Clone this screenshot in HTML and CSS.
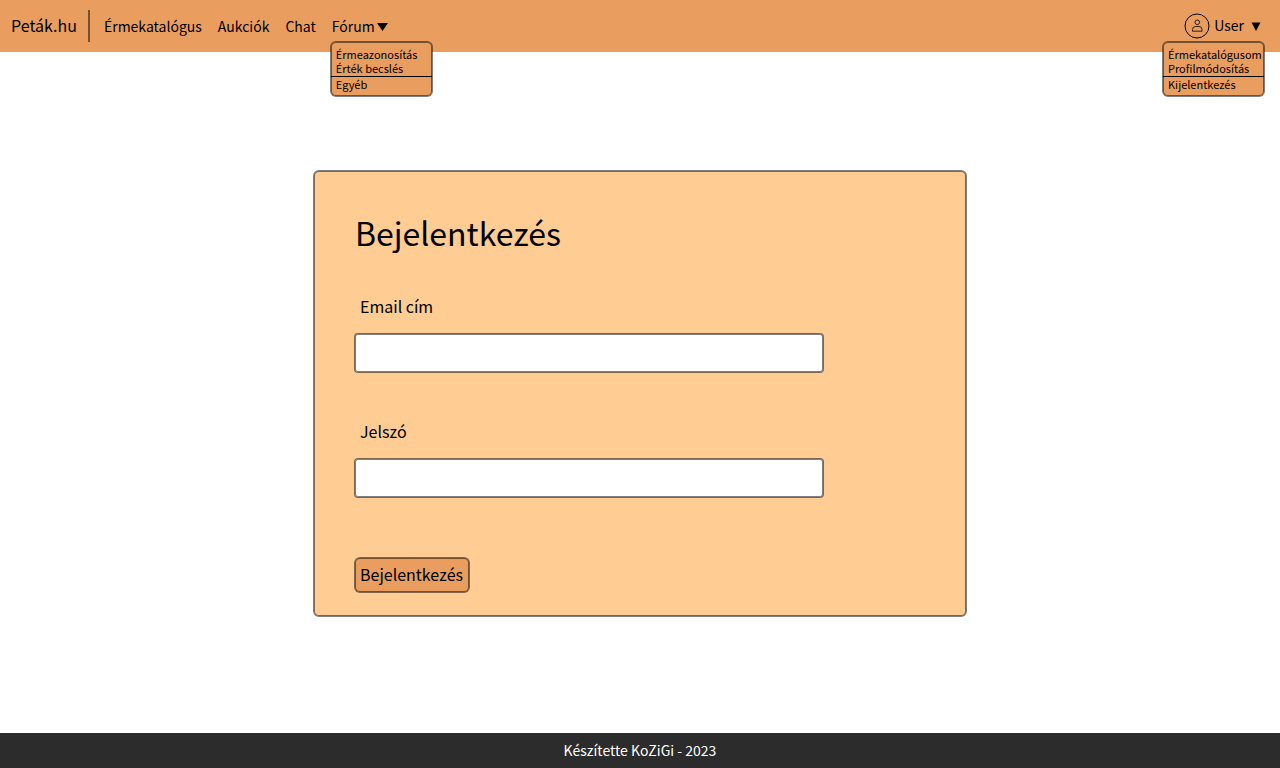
FILE: index.html
```html
<!DOCTYPE html>
<html lang="hu">
<head>
<meta charset="utf-8">
<meta name="viewport" content="width=device-width, initial-scale=1">
<title>Peták.hu</title>
<link rel="stylesheet" href="styles.css">
</head>
<body>
<header class="topbar">
  <a class="brand" href="#">Peták.hu</a>
  <nav class="nav">
    <a href="#">Érmekatalógus</a>
    <a href="#">Aukciók</a>
    <a href="#">Chat</a>
    <div class="dropdown">
      <button class="toggle" type="button">Fórum<svg class="caret" width="14" height="10" viewBox="0 0 14 10" aria-hidden="true"><path d="M2 2h11L7.500 10z"/></svg></button>
      <ul class="menu">
        <li><a href="#">Érmeazonosítás</a></li>
        <li><a href="#">Érték becslés</a></li>
        <li class="last"><a href="#">Egyéb</a></li>
      </ul>
    </div>
  </nav>
  <div class="dropdown user">
    <button class="toggle" type="button"><svg class="avatar" width="26" height="26" viewBox="0 0 26 26" fill="none" stroke="#000" aria-hidden="true"><circle cx="13" cy="13" r="12"/><g stroke-width=".8"><circle cx="13.300" cy="9.300" r="2.300"/><path d="M8.500 18.200v-1.700a3 3 0 0 1 3-3h3.500a3 3 0 0 1 3 3v1.700z" stroke-linejoin="round"/></g></svg><span class="user-name">User</span><svg class="caret" width="12" height="10" viewBox="0 0 12 10" aria-hidden="true"><path d="M1.500 1.500h9L6 10z"/></svg></button>
    <ul class="menu">
      <li><a href="#">Érmekatalógusom</a></li>
      <li><a href="#">Profilmódosítás</a></li>
      <li class="last"><a href="#">Kijelentkezés</a></li>
    </ul>
  </div>
</header>
<main class="content">
  <form class="card">
    <h1>Bejelentkezés</h1>
    <div class="field">
      <label for="email">Email cím</label>
      <input id="email" type="email">
    </div>
    <div class="field">
      <label for="password">Jelszó</label>
      <input id="password" type="password">
    </div>
    <button class="submit" type="submit">Bejelentkezés</button>
  </form>
</main>
<footer class="footer">Készítette KoZiGi - 2023</footer>
</body>
</html>
```
FILE: styles.css
```css
:root {
  --bar: #e99e60;
  --panel: #ffcc94;
  --outline: 0 0 0 1px rgba(0, 0, 0, .5), inset 0 0 0 1px rgba(0, 0, 0, .5);
}

* { box-sizing: border-box; }

body {
  margin: 0;
  min-height: 100vh;
  display: flex;
  flex-direction: column;
  background: #fff;
  color: #000;
  font: 14px/24px "Noto Sans CJK SC", "Noto Sans", sans-serif;
}

a { color: inherit; text-decoration: none; }
button, input { font: inherit; color: inherit; border: 0; margin: 0; }
button { cursor: pointer; }

.topbar {
  display: flex;
  align-items: center;
  height: 52px;
  padding: 0 16px 0 11px;
  background: var(--bar);
}

.brand {
  padding: 0 11px 2px 0;
  border-right: 2px solid rgba(0, 0, 0, .5);
  font-size: 16px;
  line-height: 30px;
}

.nav {
  display: flex;
  gap: 16px;
  padding-left: 14px;
}

.dropdown { position: relative; }

.toggle {
  display: flex;
  align-items: center;
  padding: 0;
  background: none;
}

.caret { display: block; }

.user { margin-left: auto; }
.user .toggle { padding-right: 2px; }
.user-name { margin: 0 6px 0 4px; line-height: 22px; padding-bottom: 2px; }

.menu {
  position: absolute;
  top: 28px;
  left: -1px;
  width: 101px;
  height: 54px;
  margin: 0;
  padding: 5px 0 0;
  list-style: none;
  background: var(--bar);
  border-radius: 5px;
  box-shadow: var(--outline);
  font-size: 11px;
  line-height: 14px;
  white-space: nowrap;
}

.menu a { display: block; padding-left: 5px; }
.menu .last { margin-top: 1px; border-top: 1px solid #000; }
.user .menu { left: auto; right: 0; top: 29px; }

.content {
  flex: 1;
  padding: 119px 16px 0;
}

.card {
  max-width: 652px;
  margin: 0 auto;
  padding: 35px 41px 24px;
  background: var(--panel);
  border-radius: 5px;
  box-shadow: var(--outline);
}

h1 {
  margin: 0 0 35px;
  font-size: 32px;
  line-height: 52px;
  font-weight: 400;
}

.field + .field { margin-top: 46px; }

.field label {
  display: block;
  margin-bottom: 15px;
  padding-left: 5px;
  font-size: 16px;
  line-height: 26px;
}

.field input {
  display: block;
  width: 100%;
  max-width: 468px;
  height: 38px;
  padding: 0 8px;
  background: #fff;
  border-radius: 3px;
  box-shadow: var(--outline);
}

.submit {
  display: block;
  height: 34px;
  margin-top: 61px;
  padding: 0 6px 3px 5px;
  background: var(--bar);
  border-radius: 5px;
  box-shadow: var(--outline);
  font-size: 16px;
}

.footer {
  background: #2c2c2c;
  color: #fff;
  line-height: 35px;
  text-align: center;
}
```
